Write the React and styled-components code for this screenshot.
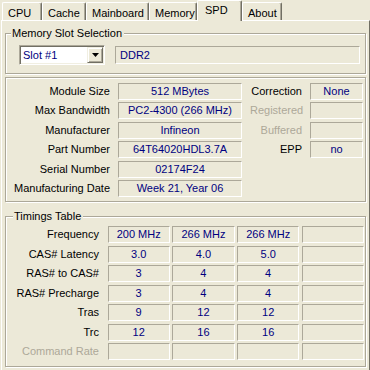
import React from "react";
import styled, { createGlobalStyle } from "styled-components";

const GlobalStyle = createGlobalStyle`
  html, body {
    margin: 0;
    padding: 0;
    background: #ece9d8;
  }
  body {
    font-family: "Liberation Sans", Arial, sans-serif;
    font-size: 11px;
    color: #000;
  }
`;

const tabs = [
  { name: "CPU", width: 40 },
  { name: "Cache", width: 44 },
  { name: "Mainboard", width: 63 },
  { name: "Memory", width: 48 },
  { name: "SPD", width: 45, active: true },
  { name: "About", width: 40 },
];

const moduleRows = [
  { label: "Module Size", value: "512 MBytes", label2: "Correction", value2: "None" },
  { label: "Max Bandwidth", value: "PC2-4300 (266 MHz)", label2: "Registered", value2: "", dim: true },
  { label: "Manufacturer", value: "Infineon", label2: "Buffered", value2: "", dim: true },
  { label: "Part Number", value: "64T64020HDL3.7A", label2: "EPP", value2: "no" },
  { label: "Serial Number", value: "02174F24" },
  { label: "Manufacturing Date", value: "Week 21, Year 06" },
];

const timingRows = [
  { label: "Frequency", values: ["200 MHz", "266 MHz", "266 MHz", ""] },
  { label: "CAS# Latency", values: ["3.0", "4.0", "5.0", ""] },
  { label: "RAS# to CAS#", values: ["3", "4", "4", ""] },
  { label: "RAS# Precharge", values: ["3", "4", "4", ""] },
  { label: "Tras", values: ["9", "12", "12", ""] },
  { label: "Trc", values: ["12", "16", "16", ""] },
  { label: "Command Rate", values: ["", "", "", ""], dim: true },
];

function App() {
  return (
    <Window>
      <GlobalStyle />
      <TabBar>
        {tabs.map((t) => (
          <Tab key={t.name} $w={t.width} $active={t.active}>
            {t.name}
          </Tab>
        ))}
      </TabBar>
      <Panel>
        <Group $h={41} $mt={12}>
          <GroupTitle $left={5}>Memory Slot Selection</GroupTitle>
          <SlotRow>
            <Select>
              <SelectText>Slot #1</SelectText>
              <DropButton>
                <svg width="7" height="4" viewBox="0 0 7 4">
                  <path d="M0 0h7L3.5 4z" fill="#000" />
                </svg>
              </DropButton>
            </Select>
            <TypeField>DDR2</TypeField>
          </SlotRow>
        </Group>

        <Group $h={125} $mt={3}>
          <ModuleGrid>
            {moduleRows.map((r) => (
              <React.Fragment key={r.label}>
                <Label>{r.label}</Label>
                <Value>{r.value}</Value>
                {r.label2 ? (
                  <>
                    <Label $dim={r.dim}>{r.label2}</Label>
                    <Value>{r.value2}</Value>
                  </>
                ) : (
                  <>
                    <span />
                    <span />
                  </>
                )}
              </React.Fragment>
            ))}
          </ModuleGrid>
        </Group>

        <Group $h={151} $mt={14}>
          <GroupTitle $left={7}>Timings Table</GroupTitle>
          <TimingGrid>
            {timingRows.map((r) => (
              <React.Fragment key={r.label}>
                <Label $dim={r.dim} $pad={6}>{r.label}</Label>
                {r.values.map((v, i) => (
                  <Value key={i}>{v}</Value>
                ))}
              </React.Fragment>
            ))}
          </TimingGrid>
        </Group>
      </Panel>
    </Window>
  );
}

export default App;

const Window = styled.div`
  width: 370px;
  height: 370px;
  overflow: hidden;
  background: #ece9d8;
`;

const TabBar = styled.div`
  display: flex;
  align-items: flex-end;
  height: 20px;
  padding-left: 2px;
`;

const Tab = styled.div`
  position: relative;
  z-index: ${(p) => (p.$active ? 1 : 0)};
  box-sizing: border-box;
  width: ${(p) => p.$w}px;
  height: ${(p) => (p.$active ? 21 : 18)}px;
  margin-bottom: ${(p) => (p.$active ? -1 : 0)}px;
  padding: ${(p) => (p.$active ? "2px 0 0 7px" : "3px 0 0 5px")};
  line-height: 14px;
  font-size: 11px;
  background: #ece9d8;
  border-top: 1px solid #fff;
  border-left: 1px solid #fff;
  border-right: 1px solid #716f64;
  box-shadow: inset -1px 0 0 #aca899;
  border-radius: 2px 2px 0 0;
`;

const Panel = styled.div`
  box-sizing: border-box;
  height: 350px;
  margin-left: 1px;
  padding: 0 0 0 3px;
  border-top: 1px solid #fff;
  border-left: 1px solid #fff;
  border-right: 1px solid #716f64;
  display: flex;
  flex-direction: column;
`;

const Group = styled.div`
  position: relative;
  box-sizing: border-box;
  width: 361px;
  height: ${(p) => p.$h}px;
  margin-top: ${(p) => p.$mt}px;
  border: 1px solid #aca899;
  box-shadow: inset 1px 1px 0 #fff, 1px 1px 0 #fff;
`;

const GroupTitle = styled.div`
  position: absolute;
  top: -8px;
  left: ${(p) => p.$left}px;
  padding: 0 2px 0 1px;
  line-height: 14px;
  font-size: 11px;
  background: #ece9d8;
`;

const SlotRow = styled.div`
  display: flex;
  align-items: center;
  gap: 10px;
  padding: 11px 5px 0 13px;
`;

const Select = styled.div`
  box-sizing: border-box;
  width: 86px;
  height: 20px;
  display: flex;
  align-items: center;
  justify-content: space-between;
  padding: 0 1px 0 3px;
  background: #fff;
  border: 1px solid;
  border-color: #aca899 #fff #fff #aca899;
  box-shadow: inset 1px 1px 0 #716f64, inset -1px -1px 0 #f1efe2;
`;

const SelectText = styled.span`
  color: #000080;
  font-size: 11px;
`;

const DropButton = styled.div`
  box-sizing: border-box;
  width: 16px;
  height: 16px;
  display: flex;
  align-items: center;
  justify-content: center;
  background: #ece9d8;
  border: 1px solid;
  border-color: #f1efe2 #716f64 #716f64 #f1efe2;
  box-shadow: inset 1px 1px 0 #fff, inset -1px -1px 0 #aca899;
`;

const TypeField = styled.div`
  box-sizing: border-box;
  flex: 1;
  height: 18px;
  padding-left: 4px;
  line-height: 16px;
  font-size: 11px;
  color: #000080;
  border: 1px solid;
  border-color: #aca899 #fff #fff #aca899;
`;

const ModuleGrid = styled.div`
  display: grid;
  grid-template-columns: 104px 124px 52px 53px;
  grid-auto-rows: 17px;
  column-gap: 8px;
  row-gap: 2.4px;
  padding-top: 5px;
`;

const TimingGrid = styled.div`
  display: grid;
  grid-template-columns: 99px repeat(4, 1fr);
  grid-auto-rows: 17px;
  column-gap: 2.6px;
  row-gap: 2.5px;
  padding: 9px 1px 0 0;
`;

const Label = styled.div`
  text-align: right;
  line-height: 17px;
  font-size: 11px;
  white-space: nowrap;
  padding-right: ${(p) => p.$pad || 0}px;
  color: ${(p) => (p.$dim ? "#aca899" : "#000")};
`;

const Value = styled.div`
  box-sizing: border-box;
  height: 17px;
  line-height: 15px;
  text-align: center;
  font-size: 11px;
  white-space: nowrap;
  overflow: hidden;
  color: #000080;
  border: 1px solid;
  border-color: #aca899 #fff #fff #aca899;
`;
